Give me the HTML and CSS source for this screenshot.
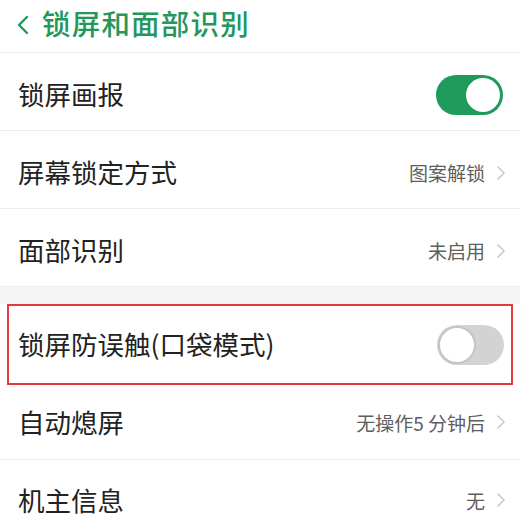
FILE: index.html
```html
<!DOCTYPE html>
<html lang="zh">
<head>
<meta charset="utf-8">
<link rel="stylesheet" href="styles.css">
</head>
<body>
<div class="page">
  <header class="header">
    <svg class="back" width="14" height="22" viewBox="0 0 14 22"><path d="M11 3 L3 11 L11 19" fill="none" stroke="#23975c" stroke-width="2.4" stroke-linecap="round" stroke-linejoin="round"/></svg>
    <span class="title">锁屏和面部识别</span>
  </header>
  <div class="row top">
    <span class="label">锁屏画报</span>
    <span class="toggle on"><span class="knob"></span></span>
  </div>
  <div class="row top">
    <span class="label">屏幕锁定方式</span>
    <span class="value">图案解锁<svg class="chev" width="10" height="16" viewBox="0 0 10 16"><path d="M2 2 L8 8 L2 14" fill="none" stroke="#c8c8c8" stroke-width="1.6" stroke-linecap="round" stroke-linejoin="round"/></svg></span>
  </div>
  <div class="row top">
    <span class="label">面部识别</span>
    <span class="value">未启用<svg class="chev" width="10" height="16" viewBox="0 0 10 16"><path d="M2 2 L8 8 L2 14" fill="none" stroke="#c8c8c8" stroke-width="1.6" stroke-linecap="round" stroke-linejoin="round"/></svg></span>
  </div>
  <div class="gap"></div>
  <div class="highlight">
    <div class="row inbox">
      <span class="label">锁屏防误触(口袋模式)</span>
      <span class="toggle off"><span class="knob"></span></span>
    </div>
  </div>
  <div class="row short">
    <span class="label">自动熄屏</span>
    <span class="value">无操作5 分钟后<svg class="chev" width="10" height="16" viewBox="0 0 10 16"><path d="M2 2 L8 8 L2 14" fill="none" stroke="#c8c8c8" stroke-width="1.6" stroke-linecap="round" stroke-linejoin="round"/></svg></span>
  </div>
  <div class="row tall">
    <span class="label">机主信息</span>
    <span class="value">无<svg class="chev" width="10" height="16" viewBox="0 0 10 16"><path d="M2 2 L8 8 L2 14" fill="none" stroke="#c8c8c8" stroke-width="1.6" stroke-linecap="round" stroke-linejoin="round"/></svg></span>
  </div>
</div>
</body>
</html>
```
FILE: styles.css
```css
html, body {
  margin: 0;
  padding: 0;
  background: #ffffff;
}
.page {
  width: 520px;
  height: 530px;
  overflow: hidden;
  font-family: "Noto Sans CJK SC", "Noto Sans", sans-serif;
  color: #222222;
}
.header {
  height: 52px;
  border-bottom: 1px solid #ececec;
  display: flex;
  align-items: center;
  padding-left: 16px;
}
.back {
  margin-right: 12px;
  margin-top: -2px;
}
.title {
  font-size: 28.5px;
  font-weight: 500;
  color: #23975c;
  letter-spacing: 1.2px;
  line-height: 1;
  margin-top: -6px;
}
.row {
  height: 77px;
  box-sizing: content-box;
  border-bottom: 1px solid #ececec;
  display: flex;
  align-items: center;
  justify-content: space-between;
  padding: 0 17px 0 18px;
}
.row.top {
  height: 71px;
  padding-top: 6px;
}
.row.short {
  height: 74px;
}
.row.tall {
  height: 80px;
  border-bottom: none;
}
.label {
  font-size: 26.5px;
  line-height: 1;
  color: #222222;
}
.value {
  display: flex;
  align-items: center;
  font-size: 19px;
  color: #5e5e5e;
}
.chev {
  margin-left: 11px;
  margin-right: -3px;
}
.gap {
  height: 17px;
  background: #f5f5f5;
}
.highlight {
  margin: 0 7px;
  border: 2px solid #e0393e;
}
.row.inbox {
  height: 77px;
  border-bottom: none;
  padding: 0 7px 0 9px;
}
.toggle {
  width: 67px;
  height: 40px;
  border-radius: 20px;
  box-sizing: border-box;
  display: flex;
  align-items: center;
  padding: 3px;
}
.toggle.on {
  background: #1e9a5b;
  justify-content: flex-end;
}
.toggle.off {
  background: #d3d3d3;
  justify-content: flex-start;
  padding: 1px;
}
.knob {
  width: 34px;
  height: 34px;
  border-radius: 50%;
  background: #ffffff;
}
.toggle.off .knob {
  width: 38px;
  height: 38px;
  box-sizing: border-box;
  border: 2px solid #c4c4c4;
}
```
